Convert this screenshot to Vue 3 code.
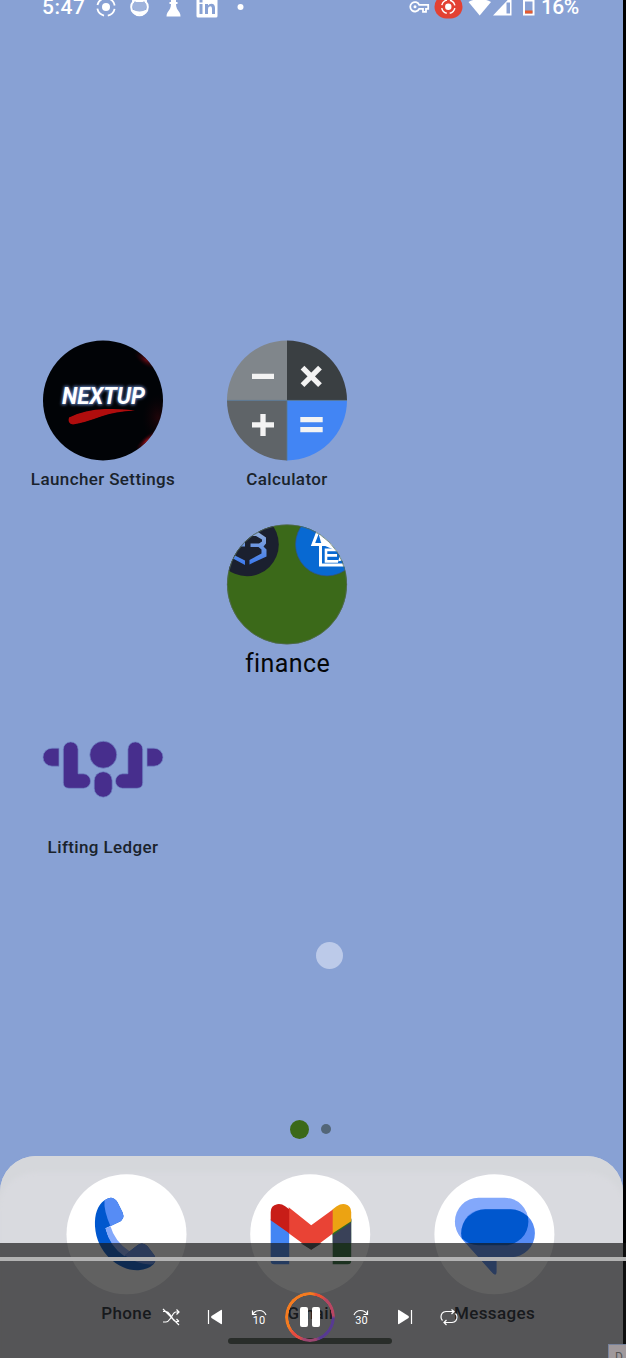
<script setup>
const apps = [
  { id: 'launcher', label: 'Launcher Settings', col: 1, row: 1 },
  { id: 'calculator', label: 'Calculator', col: 2, row: 1 },
  { id: 'finance', label: 'finance', col: 2, row: 2 },
  { id: 'lifting', label: 'Lifting Ledger', col: 1, row: 3 },
]
const dock = [
  { id: 'phone', label: 'Phone' },
  { id: 'gmail', label: 'Gmail' },
  { id: 'messages', label: 'Messages' },
]
</script>

<template>
  <div class="stage">
    <main class="screen">
      <header class="status">
        <span class="clock">5:47</span>
        <svg class="status-left" width="160" height="22" viewBox="92 0 160 22">
          <circle cx="106" cy="7" r="4" fill="#fff" />
          <circle cx="106" cy="7" r="8.800" fill="none" stroke="#fff" stroke-width="1.800" stroke-dasharray="10 3.823" stroke-dashoffset="-1.900" />
          <circle cx="139.500" cy="7" r="8.300" fill="none" stroke="#fff" stroke-width="2" />
          <path d="M133.500 0l3 1.500h6l3-1.500.8 6q0 5.500-6.800 5.500T132.700 6z" fill="#fff" opacity=".2" />
          <path d="M133 3V-1l3.500 2h6l3.500-2v4" fill="none" stroke="#fff" stroke-width="1.800" />
          <path d="M132.500 9.500q7 4 14 0l-2 5h-10z" fill="#fff" />
          <path d="M171 0h5v2h1.500v2H176c0 4 1.500 5.500 3.500 8.500q1 1.500 1 4h-14q0-2.500 1-4c2-3 3.500-4.500 3.500-8.500h-1.500V2h1.500z" fill="#fff" />
          <rect x="196.500" y="-4" width="21" height="21.500" rx="1.500" fill="#fff" />
          <path d="M199.500 4h3v10h-3zM199.500 0h3v2.500h-3zM205 4h3v1.500q1-1.800 3.300-1.800 3.700 0 3.700 4.300v6h-3V8.700q0-2.400-1.800-2.400-2.200 0-2.200 2.600V14h-3z" fill="#88a1d4" />
          <circle cx="240.500" cy="7" r="3" fill="#fff" />
        </svg>
        <svg class="status-right" width="130" height="22" viewBox="408 0 130 22">
          <path d="M419.200 4.800h9v4H426v3h-3v-3h-3.800a4.700 4.700 0 1 1 0-4z" fill="none" stroke="#fff" stroke-width="1.800" />
          <circle cx="415" cy="6.800" r="1.500" fill="#fff" />
          <rect x="434.500" y="-5" width="28" height="23.500" rx="11.700" fill="#e34133" />
          <circle cx="448.300" cy="6.700" r="3.200" fill="#fff" />
          <circle cx="448.300" cy="6.700" r="6.700" fill="none" stroke="#fff" stroke-width="1.500" stroke-dasharray="7.500 3.024" stroke-dashoffset="-1.500" />
          <path d="M468.500 2q11-6 22.500 0l-11.300 13.500z" fill="#fff" />
          <path d="M493 15.500L511.500-4v19.500z" fill="#fff" />
          <path d="M506.500 2.500h3.500v11h-3.500z" fill="#88a1d4" />
          <path d="M524 .5v14h9.500V.5z" fill="none" stroke="#fff" stroke-width="2" />
          <path d="M525 10.500h7.500v3H525z" fill="#e65a2e" />
        </svg>
        <span class="battery">16%</span>
      </header>

      <section class="apps">
        <div v-for="app in apps" :key="app.id" class="app" :class="app.id" :style="{ gridColumn: app.col, gridRow: app.row }">
          <svg v-if="app.id === 'launcher'" class="icon" viewBox="0 0 120 120">
            <defs>
              <clipPath id="launcher-clip"><circle cx="60" cy="60.400" r="60" /></clipPath>
              <radialGradient id="ember"><stop offset="0" stop-color="#b0101a" /><stop offset="1" stop-color="#30000a" stop-opacity="0" /></radialGradient>
              <filter id="glow" x="-10%" y="-30%" width="120%" height="160%"><feGaussianBlur stdDeviation="1.500" /></filter>
              <filter id="soft"><feGaussianBlur stdDeviation=".6" /></filter>
            </defs>
            <g clip-path="url(#launcher-clip)">
              <rect width="120" height="121" fill="#010306" />
              <ellipse cx="103" cy="20" rx="14" ry="6" fill="url(#ember)" transform="rotate(35 103 20)" opacity=".6" />
              <ellipse cx="104" cy="101" rx="15" ry="5" fill="url(#ember)" transform="rotate(-42 104 101)" />
              <ellipse cx="115" cy="78" rx="16" ry="24" fill="url(#ember)" opacity=".18" />
            </g>
            <text x="19" y="64" class="nextup" textLength="83" lengthAdjust="spacingAndGlyphs" fill="#6687c7" stroke="#6687c7" stroke-width="1.500" filter="url(#glow)">NEXTUP</text>
            <text x="19" y="64" class="nextup" textLength="83" lengthAdjust="spacingAndGlyphs" fill="#fff">NEXTUP</text>
            <path d="M26 77.500Q42 69.500 62 69Q82 68.500 92 70.500Q72 71.500 58 76.500Q42 82.500 30 84.500Q24 83.500 26 77.500z" fill="#b00c0e" filter="url(#soft)" />
          </svg>

          <svg v-else-if="app.id === 'calculator'" class="icon" viewBox="0 -.4 120 120">
            <path d="M60 60V0A60 60 0 0 0 0 60z" fill="#80868b" />
            <path d="M60 60V0A60 60 0 0 1 120 60z" fill="#3a3f42" />
            <path d="M60 60H0A60 60 0 0 0 60 120z" fill="#5f6468" />
            <path d="M60 60h60A60 60 0 0 1 60 120z" fill="#4285f4" />
            <path d="M0 60h120M60 60v60" stroke="#587894" stroke-width=".8" />
            <path d="M25 36h22M25 84.500h22M36 73.500v22M73.300 79.300h22.400M73.300 89.300h22.400M75.500 27.300l17.500 17.500M93 27.300L75.500 44.800" fill="none" stroke="#f3f3f3" stroke-width="5.300" />
          </svg>

          <svg v-else-if="app.id === 'finance'" class="icon" viewBox="0 -.4 120 120">
            <defs>
              <clipPath id="folder-clip"><circle cx="60" cy="60" r="60" /></clipPath>
              <linearGradient id="hex" x1="0" y1="0" x2="0" y2="1"><stop offset="0" stop-color="#91acd9" /><stop offset="1" stop-color="#3b79ee" /></linearGradient>
            </defs>
            <g clip-path="url(#folder-clip)">
              <rect width="120" height="120" fill="#3b6919" />
              <circle cx="20" cy="20" r="31.800" fill="#1b202f" />
              <path d="M27 7.500h4L39 13v6l-2.500 3 3 3v7l-17 8v-4.500l12-6.500v-4l-3-2.500h-8v-3.500h8.500L35 17v-2l-6-3.500h-4zM10 17.500h8V22h-8zM8 31l10 5v4.500L6 34z" fill="url(#hex)" />
              <circle cx="100" cy="20" r="31.500" fill="#0869d2" stroke="#345384" stroke-width=".7" />
              <path d="M91 7L86 20h7.500v20.500H119v-3.500L112 27M92 20h13" fill="none" stroke="#fff" stroke-width="3" />
              <path d="M111 25.500H99V37h12M99 31h11" fill="none" stroke="#fff" stroke-width="2.600" />
              <path d="M91 7h4l9 7 8 4 6 17-7 2 2-6-4-5-12-5-3-3z" fill="#fff" />
            </g>
            <circle cx="60" cy="60" r="59.700" fill="none" stroke="#56695c" stroke-width=".7" />
          </svg>

          <svg v-else class="icon" viewBox="0 0 120 120">
            <g fill="#472e8d" stroke="#7188c5" stroke-width=".7">
              <path d="M16 40.200H9a9 9 0 0 0 0 18h7z" />
              <path d="M104 40.200h7a9 9 0 0 1 0 18h-7z" />
              <path d="M20.300 41.300a7.400 7.400 0 0 1 14.800 0v24.500h5.200a7.200 7.200 0 0 1 0 14.500H26q-5.700 0-5.700-5.700z" />
              <path d="M99.700 41.300a7.400 7.400 0 0 0-14.800 0v24.500h-5.200a7.200 7.200 0 0 0 0 14.500H94q5.700 0 5.700-5.700z" />
              <circle cx="60.300" cy="46.700" r="13.500" />
              <rect x="51.200" y="63.700" width="18" height="25.500" rx="9" />
            </g>
          </svg>
          <span class="label">{{ app.label }}</span>
        </div>
      </section>

      <div class="pages"><i class="page current"></i><i class="page"></i></div>

      <footer class="dock">
        <div v-for="app in dock" :key="app.id" class="app">
          <svg v-if="app.id === 'phone'" class="icon" viewBox="-.5 -.3 120 120">
            <circle cx="60" cy="60" r="60" fill="#fff" />
            <path d="M38 26C31 31 28 40 28.500 52C30 79 53 97 72 96Q82 95 87 90Q91 85 87 80L81 72Q76 67 71 71L58 81Q43 70 39 54L52 48Q59 45 56 38L51 28Q46 20 38 26z" fill="#0057ce" />
            <path d="M38 26Q46 20 51 28L56 38Q59 45 52 48L44 52Q37 36 38 26z" fill="#568cf5" />
            <path d="M39 54L44 52Q48 67 63 77L58 82Q43 72 39 54z" fill="#83a8fb" />
            <path d="M58 81L71 71Q76 67 81 72L88 81Q91 87 86 90Q72 91 58 81z" fill="#5c88e8" />
          </svg>
          <svg v-else-if="app.id === 'gmail'" class="icon" viewBox="-.2 -.3 120 120">
            <circle cx="60" cy="60" r="60" fill="#fff" />
            <path d="M20.500 45L39 57v33H24q-3.500 0-3.500-3.500z" fill="#4285f4" />
            <path d="M82.500 58L101 45v41.500q0 3.500-3.500 3.500h-15z" fill="#2a6b35" />
            <path d="M82.500 58L101 45v24H82.500z" fill="#394158" />
            <path d="M82.500 57L101 44v4L82.500 61z" fill="#2f6d23" />
            <path d="M38.500 33L61 51l22-16v24L61 75.500 38.500 59z" fill="#e94335" />
            <path d="M50.500 69h21L61 75.500z" fill="#454b4b" />
            <path d="M20.500 38Q20.500 31 27 30q4-.8 8 2l4 3v24L20.500 46z" fill="#c81d18" />
            <path d="M82.500 35l4-3Q91 29 95 30q6 1.500 6 8v9L82.500 59z" fill="#eca312" />
          </svg>
          <svg v-else class="icon" viewBox="-.4 -.3 120 120">
            <defs><clipPath id="bubble-clip"><rect x="20.500" y="23.500" width="73.500" height="47.500" rx="23.700" /></clipPath></defs>
            <circle cx="60" cy="60" r="60" fill="#fff" />
            <rect x="20.500" y="23.500" width="73.500" height="47.500" rx="23.700" fill="#83a8fb" />
            <path d="M20.500 47q1 12 10 21l28 31q3.500 3 3.500-1V60H30z" fill="#83a8fb" />
            <path d="M26.800 59q0 6 4 9l27.700 31q3.500 3 3.500-1V83h14.500a24 24 0 0 0 0-48H51Q29 35 26.800 59z" fill="#568cf5" />
            <rect x="26.800" y="35" width="73.500" height="48" rx="24" fill="#0057ce" clip-path="url(#bubble-clip)" />
          </svg>
          <span class="label">{{ app.label }}</span>
        </div>
      </footer>
    </main>

    <div class="touch"></div>
    <div class="home-bar"></div>

    <div class="player">
      <div class="progress"></div>
      <div class="controls">
        <svg width="20" height="20" viewBox="0 0 20 20" class="line">
          <path d="M2 4.500h3q2 0 4 3l2 3q2 4 4 4h3M2 15h3q2 0 4-3l2-3q2-4 4-4h3M15.500 2.500L18 5l-2.500 2.500M15.500 12L18 14.500M2 2l16 16" />
        </svg>
        <svg width="20" height="20" viewBox="0 0 20 20"><path d="M3.500 3v14" stroke="#fff" stroke-width="1.200" /><path d="M17 3.500v13q0 1-1 .5L6.500 11q-1-1 0-2L16 3q1-.5 1 .5z" fill="#fff" /></svg>
        <svg width="20" height="20" viewBox="0 0 20 20" class="line">
          <path d="M3.500 3.500v4h4M3.500 7.500Q6 3.500 10.500 3.500Q15 3.500 17 8" />
          <text x="10" y="17" class="seconds">10</text>
        </svg>
        <div class="pause"><i></i><i></i></div>
        <svg width="20" height="20" viewBox="0 0 20 20" class="line">
          <path d="M16.500 3.500v4h-4M16.500 7.500Q14 3.500 9.500 3.500Q5 3.500 3 8" />
          <text x="10.500" y="17" class="seconds">30</text>
        </svg>
        <svg width="20" height="20" viewBox="0 0 20 20"><path d="M16.500 3v14" stroke="#fff" stroke-width="1.200" /><path d="M3 3.500v13q0 1 1 .5l9.500-6q1-1 0-2L4 3Q3 2.500 3 3.500z" fill="#fff" /></svg>
        <svg width="20" height="20" viewBox="0 0 20 20" class="line">
          <path d="M3.500 13.500Q2 12 2 10Q2 5 7 4.500h7.500M12.500 2.500l2.500 2-2.500 2.500M16.500 6.500Q18 8 18 10Q18 15 13 15.500H5.500M7.500 13l-2.500 2.500 2.500 2.500" />
        </svg>
      </div>
    </div>
    <div class="corner"><span>D</span></div>
  </div>
</template>

<style>
body { background: #000; overflow: hidden; }
</style>

<style scoped>
.stage { position: relative; width: 626px; height: 1358px; overflow: hidden; background: #000; font-family: Roboto, sans-serif; }
.screen { display: flex; flex-direction: column; width: 623px; height: 1358px; background: #88a1d4; }
.status { display: flex; height: 22px; flex: none; color: #fff; font-size: 21px; font-weight: 500; line-height: 14px; }
.clock { box-sizing: border-box; width: 92px; padding-left: 42px; letter-spacing: .5px; white-space: nowrap; }
.status svg { flex: none; }
.status-right { margin-left: 156px; }
.battery { margin-left: 3px; letter-spacing: -.6px; }
.apps { display: grid; grid-template-columns: repeat(3, 184px); grid-template-rows: repeat(3, 184px); margin: 318px 0 0 11px; flex: none; }
.app { display: flex; flex-direction: column; align-items: center; width: 184px; }
.icon { display: block; width: 120px; height: 120px; flex: none; overflow: visible; }
.label { margin-top: 8px; font-size: 17px; line-height: 22px; font-weight: 500; letter-spacing: .38px; color: #1a232c; white-space: nowrap; }
.finance .label { margin: 5px 0 0 1px; font-size: 25px; line-height: 30px; font-weight: 400; letter-spacing: .4px; color: #050709; }
.nextup { font: italic 700 24px Roboto, sans-serif; }
.pages { display: flex; align-items: center; gap: 12.500px; height: 20px; margin: 227px 0 0 289.500px; flex: none; }
.page { width: 10px; height: 10px; border-radius: 50%; background: #536678; }
.page.current { width: 19px; height: 19px; background: #3b6919; }
.dock { box-sizing: border-box; display: flex; height: 202px; margin-top: 17px; padding: 18px 0 0 34px; flex: none; border-radius: 36px 36px 0 0; background: #d9dadf; box-shadow: inset 0 18px 4px -2px #d5d7db; }
.dock .label { margin-left: 1px; }
.touch { position: absolute; left: 315.500px; top: 942px; width: 27px; height: 27px; border-radius: 50%; background: #bccae9; }
.home-bar { position: absolute; left: 228px; top: 1337.500px; width: 164px; height: 6px; border-radius: 3px; background: #525d55; }
.player { position: absolute; inset: 1243px 0 0; background: rgba(22, 22, 22, .68); }
.progress { height: 4px; margin-top: 14px; background: #b3b3b3; }
.controls { display: flex; gap: 24px; align-items: center; width: 298px; height: 50px; margin: 31px 0 0 161px; }
.controls svg { flex: none; }
.line { fill: none; stroke: #fff; stroke-width: 1.2; }
.seconds { font: 400 11px Roboto, sans-serif; fill: #fff; stroke: none; text-anchor: middle; }
.pause { position: relative; display: flex; justify-content: center; align-items: center; gap: 4px; flex: none; width: 50px; height: 50px; margin: 0 -8px; }
.pause::before { content: ""; position: absolute; inset: 0; border-radius: 50%; background: conic-gradient(#f47b20 0 2%, #e95032 4% 8%, #b94662 12% 24%, #573a91 26% 43%, #9a456f 46% 54%, #e54b40 58% 63%, #f47b20 68%); mask: radial-gradient(circle, transparent 21.500px, #000 22px); }
.pause i { position: relative; width: 8px; height: 20px; border-radius: 2px; background: #fff; }
.corner { position: absolute; left: 608px; top: 1344px; box-sizing: border-box; width: 18px; height: 14px; overflow: hidden; border: solid #77829b; border-width: 1px 0 0 1px; background: #a0999c; color: #555; font-size: 12px; line-height: 24px; padding-left: 6px; }
</style>
